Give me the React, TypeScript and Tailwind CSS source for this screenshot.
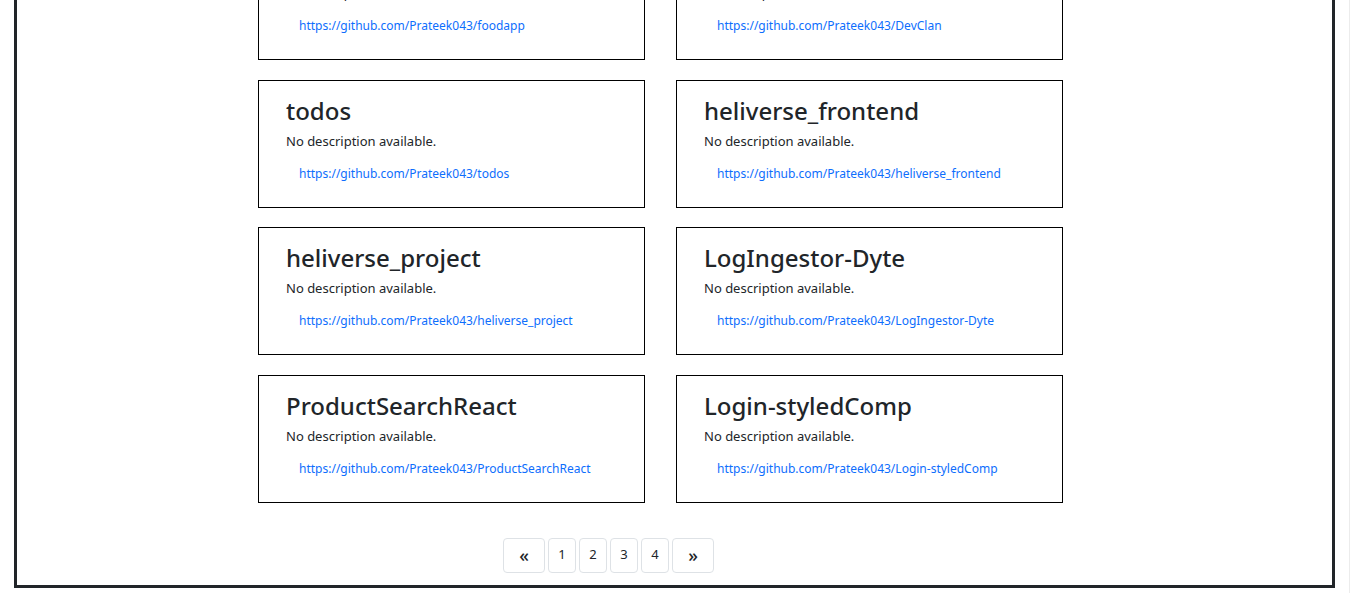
import React from 'react';

type Repo = { name: string; desc: string };

const repos: Repo[] = [
    { name: 'foodapp', desc: '' },
    { name: 'DevClan', desc: '' },
    { name: 'todos', desc: 'No description available.' },
    { name: 'heliverse_frontend', desc: 'No description available.' },
    { name: 'heliverse_project', desc: 'No description available.' },
    { name: 'LogIngestor-Dyte', desc: 'No description available.' },
    { name: 'ProductSearchReact', desc: 'No description available.' },
    { name: 'Login-styledComp', desc: 'No description available.' },
];

const RepoCard: React.FC<{ repo: Repo }> = ({ repo }) => (
    <div className="h-[128px] border border-black bg-white pl-[27px] pt-[15px]">
        <h4 className="text-[24px] leading-[30px] font-medium text-[#212529]">{repo.name}</h4>
        <p className="text-[13px] leading-[20px] mt-[5px] text-[#212529]">{repo.desc || 'No description available.'}</p>
        <a className="block pl-[13px] mt-[13px] text-[12px] leading-[20px] text-[#0d6efd]" href="#">
            https://github.com/Prateek043/{repo.name}
        </a>
    </div>
);

const PageBtn: React.FC<{ label: string; wide?: boolean }> = ({ label, wide }) => (
    <button
        className={
            (wide ? 'w-[42px] text-[18px] font-medium ' : 'w-[28px] text-[13px] ') +
            'h-[35px] flex items-center justify-center border border-[#dee2e6] rounded-[4px] bg-white text-[#212529]'
        }
    >
        {label}
    </button>
);

export default function App() {
    return (
        <div className="flex h-[593px] overflow-hidden bg-white" style={{ fontFamily: '"Noto Sans", "Open Sans", sans-serif' }}>
            <div className="w-[1349px] pl-[14px]">
                <div className="w-[1321px] -mt-[101px] border-[3px] border-[#212529] pb-[12px]">
                    <div className="pl-[241px] pt-[30px]">
                        <div className="grid grid-cols-[387px_387px] gap-x-[31px] gap-y-[19.5px]">
                            {repos.map((r) => (
                                <RepoCard key={r.name} repo={r} />
                            ))}
                        </div>
                    </div>
                    <div className="flex gap-[3px] pl-[486px] mt-[35px]">
                        <PageBtn label="«" wide />
                        <PageBtn label="1" />
                        <PageBtn label="2" />
                        <PageBtn label="3" />
                        <PageBtn label="4" />
                        <PageBtn label="»" wide />
                    </div>
                </div>
            </div>
            <div className="w-px h-full bg-[#ececec]" />
        </div>
    );
}
